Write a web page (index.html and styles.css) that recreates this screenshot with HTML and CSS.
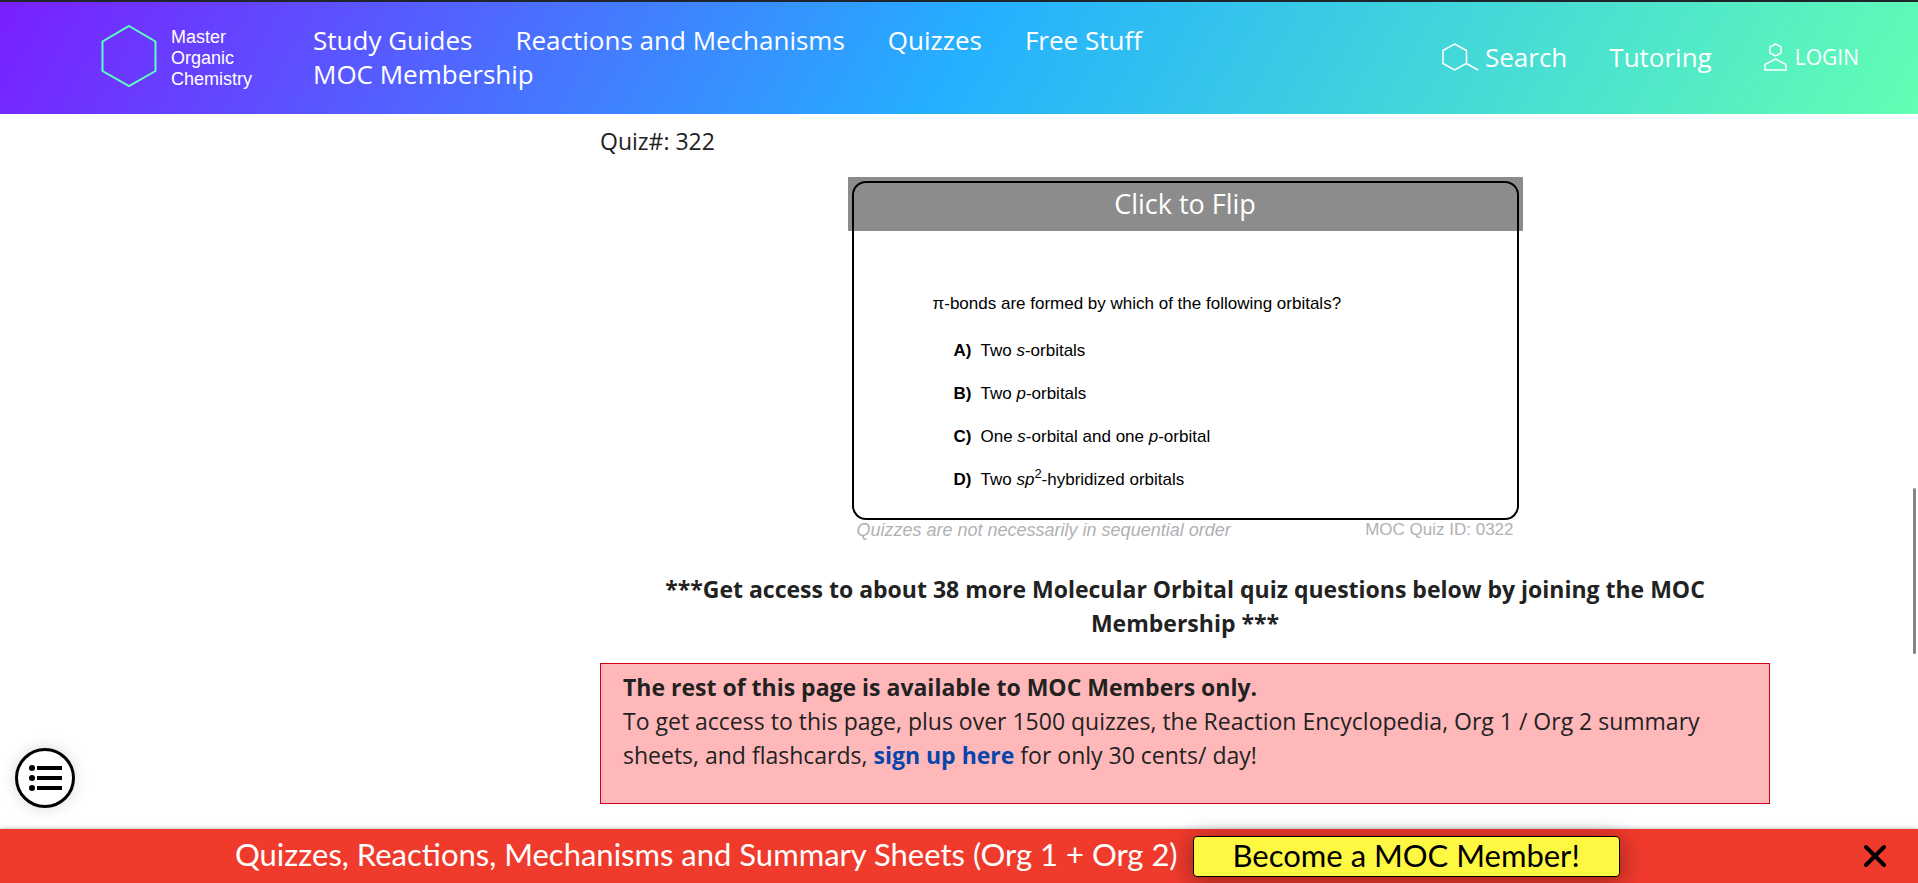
FILE: index.html
```html
<!DOCTYPE html>
<html lang="en">
<head>
<meta charset="utf-8">
<meta name="viewport" content="width=device-width, initial-scale=1">
<title>Molecular Orbital Quizzes – Master Organic Chemistry</title>
<link rel="stylesheet" href="styles.css">
</head>
<body>
<header class="site-header">
  <a class="logo" href="#">
    <svg class="logo-mark" viewBox="0 0 56 64" aria-hidden="true"><path d="M28 2 54.500 17.500V47L28 62 1.500 47V17.500Z"/></svg>
    <span class="logo-text">Master<br>Organic<br>Chemistry</span>
  </a>
  <nav class="main-nav">
    <a href="#">Study Guides</a>
    <a href="#">Reactions and Mechanisms</a>
    <a href="#">Quizzes</a>
    <a href="#">Free Stuff</a>
    <a href="#">MOC Membership</a>
  </nav>
  <nav class="tools">
    <a class="tool" href="#">
      <svg class="search-icon" viewBox="0 0 37 28" aria-hidden="true"><path d="M12.500 1 24.500 7.500V20.500L12.500 27 1 20.500V7.500ZM24.500 20.500 36 27"/></svg>
      Search
    </a>
    <a class="tool" href="#">Tutoring</a>
    <a class="tool login" href="#">
      <svg class="user-icon" viewBox="0 0 23 28" aria-hidden="true"><path d="M11.500 1 17 4V10L11.500 13 6 10V4ZM11.500 16 22 21.500V27H1V21.500Z"/></svg>
      LOGIN
    </a>
  </nav>
</header>

<main class="page">
  <article class="content">
    <p class="quiz-number">Quiz#: 322</p>
    <section class="card">
      <div class="frame">
        <p class="question">π-bonds are formed by which of the following orbitals?</p>
        <ol class="answers">
          <li><b>A)</b><span>Two <i>s</i>-orbitals</span></li>
          <li><b>B)</b><span>Two <i>p</i>-orbitals</span></li>
          <li><b>C)</b><span>One <i>s</i>-orbital and one <i>p</i>-orbital</span></li>
          <li><b>D)</b><span>Two <i>sp</i><sup>2</sup>-hybridized orbitals</span></li>
        </ol>
      </div>
      <div class="card-notes">
        <i>Quizzes are not necessarily in sequential order</i>
        <span class="quiz-id">MOC Quiz ID: 0322</span>
      </div>
      <button class="flip" type="button">Click to Flip</button>
    </section>
    <p class="more">***Get access to about 38 more Molecular Orbital quiz questions below by joining the MOC Membership ***</p>
    <section class="members-only">
      <p><strong>The rest of this page is available to MOC Members only.</strong></p>
      <p>To get access to this page, plus over 1500 quizzes, the Reaction Encyclopedia, Org 1 / Org 2 summary sheets, and flashcards, <a href="#">sign up here</a> for only 30 cents/ day!</p>
    </section>
  </article>
</main>

<button class="contents-button" type="button" aria-label="Table of contents">
  <svg viewBox="0 0 34 28" aria-hidden="true">
    <circle cx="4" cy="4" r="3"/><circle cx="4" cy="14" r="3"/><circle cx="4" cy="24" r="3"/>
    <path d="M9 4H34M9 14H34M9 24H34"/>
  </svg>
</button>
<div class="scroll-thumb"></div>

<footer class="banner">
  <p class="banner-text">Quizzes, Reactions, Mechanisms and Summary Sheets (Org 1 + Org 2)</p>
  <a class="join" href="#">Become a MOC Member!</a>
  <button class="close" type="button" aria-label="Close">
    <svg viewBox="0 0 24 24" aria-hidden="true"><path d="M3 3 21 21M21 3 3 21"/></svg>
  </button>
</footer>
</body>
</html>
```
FILE: styles.css
```css
* { box-sizing: border-box; }
body {
  margin: 0;
  min-height: 100vh;
  display: flex;
  flex-direction: column;
  background: #fff;
  color: #222;
  font: 23px/34px "Open Sans", sans-serif;
}
p { margin: 0; }
a { color: inherit; text-decoration: none; }
button { font: inherit; cursor: pointer; }

.site-header {
  display: flex;
  align-items: center;
  min-height: 114px;
  padding: 0 59px 2px 101px;
  border-top: 2px solid #20242b;
  background: linear-gradient(120deg, #7a1fff 0%, #24b0ff 50%, #62ffb3 100%) border-box;
  color: #fff;
  font-size: 26px;
}
.logo { display: flex; align-items: flex-start; gap: 14px; width: 212px; }
.logo-mark { width: 56px; height: 64px; fill: none; stroke: #5cffc0; stroke-width: 2; }
.logo-text {
  padding-top: 3px;
  font: 18px/21px "Liberation Sans", sans-serif;
}
.main-nav { flex: 1; display: flex; flex-wrap: wrap; column-gap: 43px; max-width: 930px; }
.tools { display: flex; align-items: center; gap: 42px; margin-left: auto; }
.tool { display: flex; align-items: center; gap: 6px; }
.tools svg { fill: none; stroke: #fff; stroke-width: 1.500; }
.search-icon { width: 37px; height: 28px; }
.user-icon { width: 23px; height: 28px; }
.login { gap: 8px; margin-left: 10px; font-size: 21px; }

.page { flex: 1; padding: 10px 148px 24px 600px; }
.card { position: relative; max-width: 675px; margin: 19px auto 0; padding: 4px 4px 0; }
.frame {
  height: 339px;
  padding: 109px 79px 0;
  border: 2px solid #000;
  border-radius: 14px;
  color: #000;
  font: 17px/24px "Liberation Sans", sans-serif;
}
.answers {
  display: grid;
  row-gap: 19px;
  margin: 23px 0 0;
  padding: 0 0 0 21px;
  list-style: none;
}
.answers li { display: flex; }
.answers b { width: 27px; }
.answers sup { font-size: 13px; line-height: 0; }
.card-notes {
  display: flex;
  justify-content: space-between;
  padding: 0 5px;
  color: #b1b1b4;
  font: 18px/20px "Liberation Sans", sans-serif;
}
.quiz-id { font-size: 17px; }
.flip {
  position: absolute;
  inset: 0 0 auto;
  height: 54px;
  padding: 0;
  border: 0;
  background: rgba(0, 0, 0, .45);
  color: #fff;
  font-size: 27px;
}
.more { margin-top: 32px; padding: 0 40px; text-align: center; font-weight: 700; }
.members-only {
  margin-top: 23px;
  padding: 6px 22px 31px;
  border: 1px solid #d0021b;
  background: #ffb8b9;
}
.members-only a { color: #0645ad; font-weight: 700; }

.contents-button {
  position: fixed;
  left: 15px;
  bottom: 75px;
  width: 60px;
  height: 60px;
  padding: 0;
  display: flex;
  align-items: center;
  justify-content: center;
  border: 3px solid #000;
  border-radius: 50%;
  background: #fff;
  box-shadow: 0 0 16px rgba(0, 0, 0, .15);
}
.contents-button svg { width: 34px; height: 28px; stroke: #000; stroke-width: 4; }
.contents-button circle { stroke: none; }
.scroll-thumb {
  position: fixed;
  right: 2px;
  top: 488px;
  width: 3px;
  height: 166px;
  border-radius: 2px;
  background: #858585;
}

.banner {
  display: flex;
  align-items: center;
  gap: 15px;
  min-height: 54px;
  padding: 0 31px 0 235px;
  background: #ef3a2c;
  box-shadow: 0 0 5px rgba(0, 0, 0, .3);
  color: #fff;
  font: 31px/39px Lato, sans-serif;
}
.banner-text, .join { padding-bottom: 3px; }
.join {
  width: 427px;
  border: 1px solid #000;
  border-radius: 4px;
  background: #fff842;
  box-shadow: 0 4px 26px rgba(0, 0, 0, .4);
  color: #000;
  line-height: 36px;
  text-align: center;
}
.close { display: flex; margin-left: auto; padding: 0; border: 0; background: none; }
.close svg { width: 24px; height: 24px; stroke: #000; stroke-width: 4; stroke-linecap: round; }
```
